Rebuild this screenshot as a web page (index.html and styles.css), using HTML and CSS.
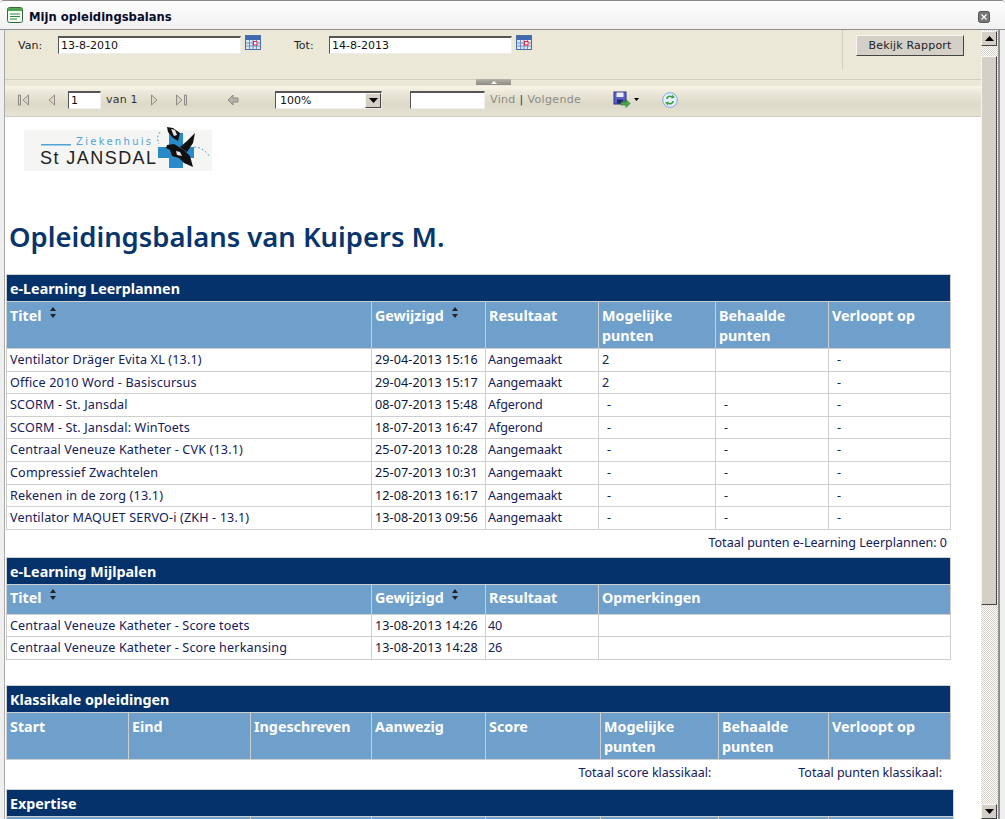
FILE: index.html
```html
<!DOCTYPE html>
<html lang="nl">
<head>
<meta charset="utf-8">
<title>Mijn opleidingsbalans</title>
<link rel="stylesheet" href="styles.css">
</head>
<body>
<div class="window">
  <div class="titlebar">
    <svg class="ticon" width="16" height="16" viewBox="0 0 16 16"><rect x="0.5" y="0.5" width="15" height="15" rx="2" fill="#f4fbf2" stroke="#2f6b35"/><rect x="1" y="1" width="14" height="3" fill="#4fa552"/><path d="M3 7h10M3 9.5h10M3 12h7" stroke="#2f8a3b"/></svg>
    <span class="ttext">Mijn opleidingsbalans</span>
    <svg class="tclose" width="12" height="12" viewBox="0 0 12 12"><rect x="0.5" y="0.5" width="11" height="11" rx="2" fill="#777" stroke="#555"/><path d="M3.5 3.5l5 5M8.5 3.5l-5 5" stroke="#fff" stroke-width="1.2"/></svg>
  </div>
  <div class="frame">
    <div class="main">
      <div class="params">
        <div class="fields">
          <label class="plabel van">Van:</label>
          <input class="pinput" value="13-8-2010">
          <svg class="cal" width="16" height="16" viewBox="0 0 16 16"><rect x="0.5" y="0.5" width="15" height="14" fill="#dfe8f7" stroke="#4a6ea8"/><rect x="1" y="1" width="14" height="4" fill="#3f68b0"/><path d="M1 8h14M1 11h14M4.500 5v9M8 5v9M11.500 5v9" stroke="#6f8fc8"/><rect x="8.500" y="6.500" width="3.500" height="3.500" fill="#fff" stroke="#e23"/></svg>
          <label class="plabel tot">Tot:</label>
          <input class="pinput" value="14-8-2013">
          <svg class="cal" width="16" height="16" viewBox="0 0 16 16"><rect x="0.5" y="0.5" width="15" height="14" fill="#dfe8f7" stroke="#4a6ea8"/><rect x="1" y="1" width="14" height="4" fill="#3f68b0"/><path d="M1 8h14M1 11h14M4.500 5v9M8 5v9M11.500 5v9" stroke="#6f8fc8"/><rect x="8.500" y="6.500" width="3.500" height="3.500" fill="#fff" stroke="#e23"/></svg>
        </div>
        <div class="viewcell"><button class="viewbtn">Bekijk Rapport</button></div>
        <div class="collapse"><svg width="6" height="3" viewBox="0 0 6 3"><path d="M0 3L3 0l3 3z" fill="#fff"/></svg></div>
      </div>
      <div class="toolbar">
        <svg class="tb first" width="14" height="14" viewBox="0 0 14 14"><path d="M1.5 2v10h2V2zM11.5 2v10L6 7z" fill="#d9d6c8" stroke="#8d8d86"/></svg>
        <svg class="tb prev" width="14" height="14" viewBox="0 0 14 14"><path d="M9.5 2v10L4 7z" fill="#d9d6c8" stroke="#8d8d86"/></svg>
        <input class="pageinput" value="1">
        <span class="van1">van 1</span>
        <svg class="tb next" width="14" height="14" viewBox="0 0 14 14"><path d="M4.5 2v10L10 7z" fill="#d9d6c8" stroke="#8d8d86"/></svg>
        <svg class="tb last" width="14" height="14" viewBox="0 0 14 14"><path d="M2.5 2v10L8 7zM10.5 2v10h2V2z" fill="#d9d6c8" stroke="#8d8d86"/></svg>
        <svg class="tb back" width="14" height="14" viewBox="0 0 14 14"><path d="M2 7l5-5v3h5v4H7v3z" fill="#b4b3aa" stroke="#8d8d86"/></svg>
        <div class="zoomsel"><span class="zoomval">100%</span><span class="zoomarrow"><svg width="9" height="5" viewBox="0 0 9 5"><path d="M0 0h9L4.500 5z" fill="#000"/></svg></span></div>
        <input class="findinput">
        <span class="findlinks"><span>Vind</span> <i>|</i> <span>Volgende</span></span>
        <svg class="tb save" width="18" height="18" viewBox="0 0 18 18"><rect x="1" y="1" width="12" height="12" fill="#5a63c9" stroke="#2b2f80"/><rect x="3.5" y="1.5" width="7" height="4.5" fill="#e8ecff"/><rect x="4" y="8.5" width="6" height="4" fill="#23266a"/><path d="M8 11h5V8.500l4 4-4 4V14H8z" fill="#48a848" stroke="#2d7d2d" stroke-width="0.7"/></svg>
        <svg class="caret" width="5" height="3" viewBox="0 0 5 3"><path d="M0 0h5L2.500 3z" fill="#000"/></svg>
        <svg class="tb refresh" width="16" height="16" viewBox="0 0 16 16"><circle cx="8" cy="8" r="7.3" fill="#e5f0fb" stroke="#7ea8d8"/><path d="M4 7a4 4 0 0 1 6-3V2.500l3 3-3.500 1V5.500A3 3 0 0 0 5.500 7z" fill="#3f9e3f"/><path d="M12 9a4 4 0 0 1-6 3v1.500l-3-3 3.500-1v1A3 3 0 0 0 10.500 9z" fill="#3f9e3f"/></svg>
      </div>
      <div class="report">
        <div class="logo">
          <svg width="188" height="45" viewBox="0 0 188 45">
            <rect x="0" y="4" width="188" height="41" fill="#f5f5f3"/>
            <path d="M145 7h14v14h11v11h-11v10h-14V32h-11V21h11z" fill="#2a8ac8"/>
            <path d="M136 6C133 10 133 14 135 18M170 21C177 21 183 26 186 31" fill="none" stroke="#4fa3d8" stroke-dasharray="2 2"/>
            <rect x="17" y="18" width="30" height="1.500" fill="#4fa3d8"/>
            <text x="52" y="19" class="lzk">Ziekenhuis</text>
            <text x="16" y="38" class="lst">St JANSDAL</text>
            <path d="M143 1l6 1 7 5-2 8-5-3-5-6z" fill="#111"/>
            <path d="M147 3l4 1 2 5-3 1z" fill="#e8e8e8"/>
            <path d="M171 7l-2 10-6 9-7-5 7-6z" fill="#111"/>
            <path d="M143 19l7-1 10 6 6 6 3 11-9-4-5-5-7-2-2-6-4-2z" fill="#111"/>
            <path d="M152 25l4 1 2 4-5-1z" fill="#e8e8e8"/>
          </svg>
        </div>
        <h1 class="rtitle">Opleidingsbalans van Kuipers M.</h1>

        <table class="rt">
          <colgroup><col class="c1"><col class="c2"><col class="c3"><col class="c4"><col class="c5"><col class="c6"></colgroup>
          <thead>
            <tr><th class="sec" colspan="6">e-Learning Leerplannen</th></tr>
            <tr class="head tall"><th>Titel<svg class="sort" width="8" height="11" viewBox="0 0 8 11"><path d="M4 0l3 4H1zM4 11L1 7h6z" fill="#222"/></svg></th><th>Gewijzigd<svg class="sort" width="8" height="11" viewBox="0 0 8 11"><path d="M4 0l3 4H1zM4 11L1 7h6z" fill="#222"/></svg></th><th>Resultaat</th><th>Mogelijke punten</th><th>Behaalde punten</th><th>Verloopt op</th></tr>
          </thead>
          <tbody>
            <tr><td>Ventilator Dräger Evita XL (13.1)</td><td>29-04-2013 15:16</td><td>Aangemaakt</td><td>2</td><td></td><td class="dash">-</td></tr>
            <tr><td>Office 2010 Word - Basiscursus</td><td>29-04-2013 15:17</td><td>Aangemaakt</td><td>2</td><td></td><td class="dash">-</td></tr>
            <tr><td>SCORM - St. Jansdal</td><td>08-07-2013 15:48</td><td>Afgerond</td><td class="dash">-</td><td class="dash">-</td><td class="dash">-</td></tr>
            <tr><td>SCORM - St. Jansdal: WinToets</td><td>18-07-2013 16:47</td><td>Afgerond</td><td class="dash">-</td><td class="dash">-</td><td class="dash">-</td></tr>
            <tr><td>Centraal Veneuze Katheter - CVK (13.1)</td><td>25-07-2013 10:28</td><td>Aangemaakt</td><td class="dash">-</td><td class="dash">-</td><td class="dash">-</td></tr>
            <tr><td>Compressief Zwachtelen</td><td>25-07-2013 10:31</td><td>Aangemaakt</td><td class="dash">-</td><td class="dash">-</td><td class="dash">-</td></tr>
            <tr><td>Rekenen in de zorg (13.1)</td><td>12-08-2013 16:17</td><td>Aangemaakt</td><td class="dash">-</td><td class="dash">-</td><td class="dash">-</td></tr>
            <tr><td>Ventilator MAQUET SERVO-i (ZKH - 13.1)</td><td>13-08-2013 09:56</td><td>Aangemaakt</td><td class="dash">-</td><td class="dash">-</td><td class="dash">-</td></tr>
          </tbody>
        </table>
        <div class="total t1">Totaal punten e-Learning Leerplannen: 0</div>

        <table class="rt">
          <colgroup><col class="c1"><col class="c2"><col class="c3"><col class="c46"></colgroup>
          <thead>
            <tr><th class="sec" colspan="4">e-Learning Mijlpalen</th></tr>
            <tr class="head"><th>Titel<svg class="sort" width="8" height="11" viewBox="0 0 8 11"><path d="M4 0l3 4H1zM4 11L1 7h6z" fill="#222"/></svg></th><th>Gewijzigd<svg class="sort" width="8" height="11" viewBox="0 0 8 11"><path d="M4 0l3 4H1zM4 11L1 7h6z" fill="#222"/></svg></th><th>Resultaat</th><th>Opmerkingen</th></tr>
          </thead>
          <tbody>
            <tr><td>Centraal Veneuze Katheter - Score toets</td><td>13-08-2013 14:26</td><td>40</td><td></td></tr>
            <tr><td>Centraal Veneuze Katheter - Score herkansing</td><td>13-08-2013 14:28</td><td>26</td><td></td></tr>
          </tbody>
        </table>
        <div class="gap"></div>

        <table class="rt">
          <colgroup><col class="k1"><col class="k2"><col class="k3"><col class="c2"><col class="k5"><col class="k6"><col class="k7"><col class="c6"></colgroup>
          <thead>
            <tr><th class="sec" colspan="8">Klassikale opleidingen</th></tr>
            <tr class="head tall"><th>Start</th><th>Eind</th><th>Ingeschreven</th><th>Aanwezig</th><th>Score</th><th>Mogelijke punten</th><th>Behaalde punten</th><th>Verloopt op</th></tr>
          </thead>
        </table>
        <div class="total t3"><span class="ts">Totaal score klassikaal:</span><span>Totaal punten klassikaal:</span></div>

        <table class="rt wide">
          <colgroup><col class="k1"><col class="k2"><col class="k3"><col class="c2"><col class="k5"><col class="k6"><col class="k7"><col class="c6w"></colgroup>
          <thead>
            <tr><th class="sec" colspan="8">Expertise</th></tr>
            <tr class="head"><th colspan="2"></th><th></th><th></th><th></th><th></th><th></th><th></th></tr>
          </thead>
        </table>
      </div>
    </div>
    <div class="scrollbar">
      <div class="sbtn"><svg width="9" height="5" viewBox="0 0 9 5"><path d="M0 5h9L4.500 0z" fill="#000"/></svg></div>
      <div class="sgap1"></div>
      <div class="sthumb"></div>
      <div class="strack"></div>
      <div class="sbtn"><svg width="9" height="5" viewBox="0 0 9 5"><path d="M0 0h9L4.500 5z" fill="#000"/></svg></div>
    </div>
  </div>
</div>
</body>
</html>
```
FILE: styles.css
```css
* { box-sizing: border-box; }
html, body { margin: 0; padding: 0; height: 100%; overflow: hidden; background: #fff; }
body { font-family: "Noto Sans", "DejaVu Sans", sans-serif; font-size: 12.6px; color: #14205a; }
.window { width: 1005px; height: 819px; display: flex; flex-direction: column; overflow: hidden; border-top: 1px solid #8a8a8a; border-radius: 4px 4px 0 0; background: #efefef; }
.titlebar { height: 29px; flex: none; display: flex; align-items: center; padding: 3px 15px 0 7px; gap: 6px; background: linear-gradient(#fdfdfd, #f1f1f1); border-bottom: 1px solid #8f8f8f; }
.ticon { margin-top: -3px; }
.ttext { font: 700 11.6px "DejaVu Sans", sans-serif; color: #0a0a28; flex: 1; }
.frame { flex: 1; min-height: 0; display: flex; margin-left: 4px; margin-right: 5px; border-left: 1px solid #a9a9a9; background: #fff; overflow: hidden; border-right: 2px solid #8f8f8f; }
.main { flex: 1; min-width: 0; display: flex; flex-direction: column; }
.params { height: 50px; flex: none; display: flex; position: relative; z-index: 1; background: #ebe8d8; border-bottom: 1px solid #cfcdc2; font-family: "DejaVu Sans", sans-serif; font-size: 11px; }
.fields { flex: 1; display: flex; align-items: flex-start; padding-top: 6px; }
.plabel { margin-top: 3px; font-size: 11px; color: #222; }
.van { padding-left: 13px; box-sizing: content-box; width: 27px; margin-right: 13px; }
.tot { margin-left: 33px; width: 24px; margin-right: 11px; }
.pinput { width: 183px; height: 18px; font: 11px "DejaVu Sans", sans-serif; color: #111; padding: 0 2px; background: #fff; border: 1px solid; border-color: #555 #eee #eee #555; border-top-width: 2px; }
.cal { margin-left: 4px; margin-top: -1px; }
.viewcell { width: 139px; flex: none; border-left: 1px solid #cfcdc2; height: 39px; padding: 5px 0 0 13px; }
.viewbtn { width: 108px; height: 21px; font: 11px "DejaVu Sans", sans-serif; letter-spacing: 0.2px; color: #222; padding: 0; background: #d4d0c8; border: 1px solid; border-color: #f6f6f6 #444 #444 #f6f6f6; }
.collapse { position: absolute; left: 471px; top: 100%; width: 35px; height: 6px; background: linear-gradient(#b5b3aa, #8d8c85); display: flex; align-items: center; justify-content: center; }
.collapse svg { display: block; }
.toolbar { height: 37px; flex: none; display: flex; align-items: center; padding-top: 3px; background: linear-gradient(#ebe8d8 0 6px, #f6f3e4 6px 8px, #ece9da 12px, #dcd9c9 24px, #e6e3d4 100%); border-bottom: 1px solid #cfcdc2; font-family: "DejaVu Sans", sans-serif; font-size: 11px; }
.tb { flex: none; }
.first { margin-left: 12px; }
.prev { margin-left: 14px; }
.pageinput { width: 33px; height: 18px; margin-left: 9px; padding: 0 2px; font: 11px "DejaVu Sans", sans-serif; color: #111; background: #fff; border: 1px solid; border-color: #555 #eee #eee #555; border-top-width: 2px; }
.van1 { margin-left: 5px; width: 40px; color: #333; font-size: 11px; letter-spacing: 0.2px; }
.next { margin-left: 1px; }
.last { margin-left: 13px; }
.back { margin-left: 38px; }
.zoomsel { width: 107px; height: 18px; margin-left: 35px; display: flex; justify-content: space-between; background: #fff; border: 1px solid; border-color: #555 #eee #eee #555; border-top-width: 2px; padding-left: 4px; align-items: center; color: #111; }
.zoomarrow { width: 16px; height: 15px; background: #d4d0c8; border: 1px solid; border-color: #f6f6f6 #444 #444 #f6f6f6; display: flex; align-items: center; justify-content: center; }
.findinput { width: 75px; height: 18px; margin-left: 28px; background: #fff; border: 1px solid; border-color: #555 #eee #eee #555; border-top-width: 2px; }
.findlinks { margin-left: 5px; width: 123px; color: #8b8b85; font-size: 11px; letter-spacing: 0.35px; }
.findlinks i { font-style: normal; color: #43315a; }
.caret { margin-left: 3px; }
.refresh { margin-left: 23px; }
.report { flex: 1; min-height: 0; overflow: hidden; background: #fff; padding-left: 1px; }
.logo { height: 56px; padding-left: 18px; padding-top: 9px; }
.logo svg { display: block; }
.lzk { font: 10px "DejaVu Sans", sans-serif; letter-spacing: 2.3px; fill: #4fa3d8; }
.lst { font: 18px "Liberation Sans", sans-serif; letter-spacing: 1.45px; fill: #222; }
.rtitle { margin: 46px 0 19px 3px; font: 600 27.400px/36px "Noto Sans", sans-serif; color: #07356c; }
.rt { width: 944px; border-collapse: collapse; table-layout: fixed; background: #fff; }
.rt.wide { width: 947px; }
.rt th, .rt td { border: 1px solid #cfcfcf; text-align: left; vertical-align: top; }
.rt td { height: 22.6px; padding: 3px 3px 0 3px; font-size: 12.6px; line-height: 16px; white-space: nowrap; overflow: hidden; }
.rt td:first-child { letter-spacing: 0.15px; }
.rt td:nth-child(2) { letter-spacing: 0.1px; color: #0e1638; }
.rt td:nth-child(3) { letter-spacing: -0.1px; padding-left: 2px; }
.rt .dash { padding-left: 8px; }
.rt .sec { height: 27px; background: #05326a; color: #fff; font: 700 14.300px/24px "Noto Sans", sans-serif; padding: 2px 3px 0; }
.head th { height: 30px; background: #6f9fcb; color: #fff; font: 700 14.300px/20px "Noto Sans", sans-serif; padding: 3px 3px 0 3px; }
.head.tall th { height: 47px; padding-top: 4px; }
.sort { margin-left: 7px; vertical-align: 3px; }
.c1 { width: 365px; } .c2 { width: 114px; } .c3 { width: 113px; } .c4 { width: 117px; } .c5 { width: 113px; } .c6 { width: 122px; }
.c46 { width: 352px; }
.k1 { width: 122px; } .k2 { width: 122px; } .k3 { width: 121px; } .k5 { width: 115px; } .k6 { width: 118px; } .k7 { width: 110px; } .c6w { width: 125px; }
.total { height: 27px; padding: 5px 4px 0 0; text-align: right; font-size: 12.5px; line-height: 16px; width: 945px; }
.t3 { height: 29px; padding-right: 9px; padding-top: 5px; }
.ts { margin-right: 87px; }
.gap { height: 25px; }
.scrollbar { width: 17px; flex: none; display: flex; flex-direction: column; padding: 1px 0 0; background-color: #f2f2f2; background-image: repeating-conic-gradient(#d4d0c8 0 25%, #fff 0 50%); background-size: 2px 2px; }
.sbtn { height: 15px; flex: none; width: 16px; background: #d4d0c8; border: 1px solid; border-color: #f6f6f6 #444 #444 #f6f6f6; display: flex; align-items: center; justify-content: center; }
.sgap1 { height: 10px; flex: none; }
.sthumb { height: 549px; flex: none; width: 16px; background: #d4d0c8; border: 1px solid; border-color: #f6f6f6 #444 #444 #f6f6f6; }
.strack { flex: 1; }
```
